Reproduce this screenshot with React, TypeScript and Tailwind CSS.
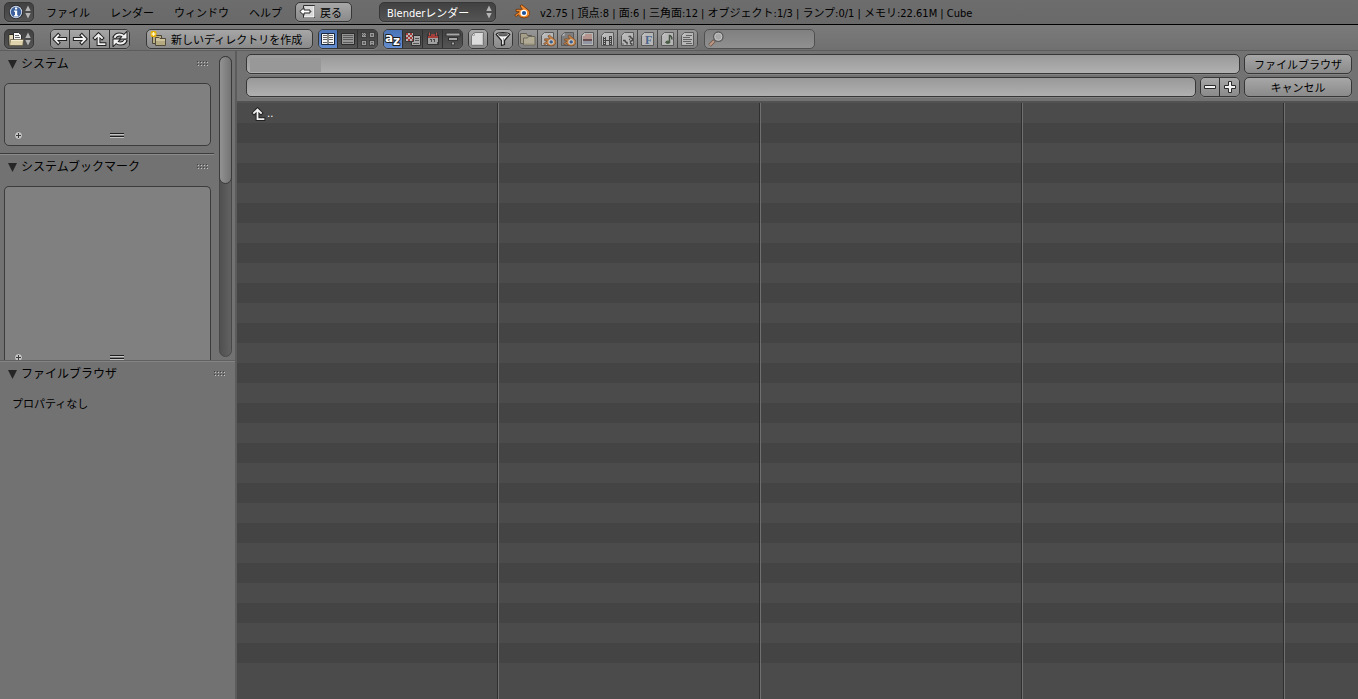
import type { ReactNode } from "react";

const fontStack = "font-['DejaVu_Sans_Condensed','DejaVu_Sans','Noto_Sans_CJK_JP',sans-serif]";
const outline = "border border-[#373737] shadow-[0_1px_0_rgba(255,255,255,0.12)]";
const toolFill = "bg-linear-to-b from-[#a7a7a7] to-[#8a8a8a]";
const darkFill = "bg-linear-to-b from-[#414141] to-[#545454]";
const blueFill = "bg-linear-to-b from-[#4a74b6] to-[#648ed0]";

function Icon({ children, className = "" }: { children: ReactNode; className?: string }) {
  return (
    <svg viewBox="0 0 16 16" aria-hidden="true" className={`h-4 w-4 shrink-0 ${className}`}>
      {children}
    </svg>
  );
}

function Outlined({ d, w = 2 }: { d: string; w?: number }) {
  return (
    <g fill="none" strokeLinejoin="miter">
      <path d={d} stroke="#222" strokeWidth={w + 2} strokeLinecap="square" />
      <path d={d} stroke="#f2f2f2" strokeWidth={w} strokeLinecap="square" />
    </g>
  );
}

function UpDown() {
  return (
    <svg viewBox="0 0 6 14" aria-hidden="true" className="h-3.5 w-1.5 shrink-0">
      <path d="M3 .5 5.7 6H.3Z M3 13.5 5.7 8H.3Z" fill="#b4b4b4" />
    </svg>
  );
}

const InfoIcon = () => (
  <Icon>
    <circle cx="8" cy="8" r="7" fill="#23262c" />
    <circle cx="8" cy="8" r="6.2" fill="#cfd8e6" />
    <circle cx="8" cy="8" r="5.2" fill="#3b609b" />
    <path d="M7 3.5h2.2v2H7ZM6 6.5h3.2v4.7h1v1.3H6v-1.3h1V7.7H6Z" fill="#fff" />
  </Icon>
);

const FileBrowserIcon = () => (
  <Icon>
    <path d="M.8 14.2V3.5h5v10.7Z" fill="#e3d9b8" stroke="#2a2824" />
    <path d="M5.5 1.5h5l3 2.5v6h-8Z" fill="#f6f6f6" stroke="#2d2d2d" />
    <path d="M7 4.5h4M7 6.5h5" stroke="#666" />
    <path d="M2.5 8.5h13l-.7 6H1.5Z" fill="#ddd2ac" stroke="#5a5341" strokeWidth="0.7" />
    <path d="M3 9.5h12" stroke="#f3ebcd" />
  </Icon>
);

const BackIcon = () => (
  <Icon>
    <path d="M4.5 1.5h11v12h-11Z" fill="#d9d9d9" stroke="#303030" />
    <path d="M5 13h10V2" fill="none" stroke="#fff" />
    <path d="M5 3.7.8 7.5 5 11.3V9h6V6H5Z" fill="#fff" stroke="#222" />
    <path d="M11 7.5h1.5" stroke="#555" />
  </Icon>
);

const ArrowLeft = () => (
  <Icon><Outlined d="M6.2 4.3 2.7 8l3.5 3.7M3.2 8h10" w={1.8} /></Icon>
);
const ArrowRight = () => (
  <Icon><Outlined d="M9.8 4.3 13.3 8l-3.5 3.7M12.8 8h-10" w={1.8} /></Icon>
);
const ArrowUp = () => (
  <Icon><Outlined d="M3 7 6.5 3.5 10 7M6.5 4.2v9h6" w={1.8} /></Icon>
);
const ReloadIcon = () => (
  <svg viewBox="0 0 18 16" aria-hidden="true" className="h-4 w-4.5 shrink-0">
    <g fill="none" stroke="#222" strokeWidth="4">
      <path d="M3 7.3Q4.5 3.4 8.5 3.4q2.5 0 4 1.6M15 8.7Q13.5 12.6 9.5 12.6q-2.5 0-4-1.6" />
    </g>
    <path d="M15.5 1.5v6h-6Z M2.5 14.5v-6h6Z" fill="#f2f2f2" stroke="#222" strokeWidth="2" />
    <g fill="none" stroke="#f2f2f2" strokeWidth="2">
      <path d="M3.5 6.8Q4.8 3.4 8.5 3.4q2.5 0 4 1.6M14.5 9.2Q13.2 12.6 9.5 12.6q-2.5 0-4-1.6" />
    </g>
    <path d="M15.5 1.5v6h-6Z M2.5 14.5v-6h6Z" fill="#f2f2f2" />
  </svg>
);

const NewFolderIcon = () => (
  <Icon>
    <path d="M2.5 12.5v-8h9v8Z" fill="#bcae83" stroke="#4b4636" />
    <path d="M5.5 14.5V6.5H9l1 1h5.5v7Z" fill="#d0c49c" stroke="#4f4a3a" />
    <path d="M6 14V10h9v4Z" fill="#b5a981" />
    <path d="M3.5 0v6M.5 3h6" stroke="#e1a500" strokeWidth="3" />
    <path d="M1 .5l5 5M6 .5l-5 5" stroke="#eeb500" strokeWidth="1.3" />
    <path d="M3.5 1v4M1.5 3h4" stroke="#fff7c5" strokeWidth="1.3" />
  </Icon>
);

const ShortListIcon = () => (
  <Icon>
    <path d="M1.5 2.5h13v11h-13Z" fill="#f5f5f5" stroke="#19263e" />
    <path d="M3 4.5h4M3 6.5h4M3 8.5h4M3 11.5h4M9 4.5h4M9 6.5h4M9 8.5h4M9 11.5h4" stroke="#666" />
    <path d="M8 3v10" stroke="#222" />
  </Icon>
);
const LongListIcon = () => (
  <Icon>
    <path d="M1.5 2.5h13v11h-13Z" fill="#959595" stroke="#2b2b2b" />
    <path d="M3 4.5h10M3 6.5h10M3 8.5h10M3 11.5h10" stroke="#5a5a5a" />
  </Icon>
);
const ThumbsIcon = () => (
  <Icon>
    {[[1.5, 1.5], [9.5, 1.5], [1.5, 9.5], [9.5, 9.5]].map(([x, y]) => (
      <rect key={`${x}-${y}`} x={x} y={y} width="5" height="5" fill="#9a9a9a" stroke="#333" strokeWidth="0.8" />
    ))}
    <path d="M3 2h1v1H3ZM5 2h1v1H5ZM2 3h1v1H2ZM4 3h1v1H4ZM3 4h1v1H3ZM5 4h1v1H5ZM11 3h2v2h-2ZM11 11h2v1h-2ZM11 13h2v1h-2ZM3 11h2v2H3Z" fill="#606060" />
  </Icon>
);

const AzIcon = () => (
  <svg viewBox="0 0 18 18" aria-hidden="true" className="h-4.5 w-4.5 shrink-0">
    <g
      fill="#fff"
      stroke="#1e1e1e"
      strokeWidth="2"
      strokeLinejoin="round"
      fontSize="12"
      fontWeight="700"
      fontFamily="DejaVu Sans, sans-serif"
      className="[paint-order:stroke]"
    >
      <text x="1" y="11.5">a</text>
      <text x="9" y="15">z</text>
    </g>
  </svg>
);

const ExtensionIcon = () => (
  <Icon>
    <path d="M6.5 4.5h9v10h-9Z" fill="#a8a8a8" stroke="#303030" />
    <path d="M10 7.5h4M10 9.5h4M8 12.5h6" stroke="#555" />
    <path d="M.5 1.5h8v9h-8Z" fill="#b4b4b4" stroke="#363636" />
    <path d="M1 2h2v2H1ZM5 2h2v2H5ZM3 4h2v2H3ZM7 4h1v2H7ZM1 6h2v2H1ZM5 6h2v2H5ZM3 8h2v2H3ZM7 8h1v2H7Z" fill="#a43a36" />
  </Icon>
);
const CalendarIcon = () => (
  <Icon>
    <path d="M2.5 3.5h11v10h-11Z" fill="#a0a0a0" stroke="#323232" />
    <path d="M3 3h10v4H3Z" fill="#a43f3c" />
    <path d="M4.5 1v4M11.5 1v4" stroke="#383838" strokeWidth="3" />
    <path d="M4.5 1.5v3M11.5 1.5v3" stroke="#bd5551" />
    <path d="M6.5 8v3M9.5 8v3M5 8.5h1M8 8.5h1M12.5 11v2" fill="none" stroke="#4a4a4a" />
  </Icon>
);
const SizeIcon = () => (
  <Icon>
    <path d="M.5 3.5h15M3 8h10M6.5 12.5h3" stroke="#2e2e2e" strokeWidth="3.6" />
    <path d="M1.5 3.5h13M4 8h8M7 12.5h2" stroke="#a6a6a6" strokeWidth="1.8" />
  </Icon>
);

function Page({ children, fill = "#dcdcdc" }: { children?: ReactNode; fill?: string }) {
  return (
    <Icon>
      <path d="M4.5 1.5h9v13h-12v-10Z" fill={fill} stroke="#4c4c4c" />
      <path d="M2 4.5 4.5 2v2.5Z" fill="#f4f4f4" />
      {children}
    </Icon>
  );
}

const GhostIcon = () => (
  <Icon>
    <path d="M4.5 1.5h9v13h-12v-10Z" fill="#dcdcdc" stroke="#777" />
    <path d="M2 4.5h2.5V2" fill="none" stroke="#aaa" />
    <path d="M2.5 13.5h10V3" fill="none" stroke="#c2c2c2" />
  </Icon>
);
const FunnelIcon = () => (
  <Icon>
    <path d="M1.2 3.5 6.5 9.5v5l3-1V9.5l5.3-6Q14 1.5 8 1.5T1.2 3.5Z" fill="#f4f4f4" stroke="#222" strokeWidth="1.2" />
    <ellipse cx="8" cy="3.8" rx="4.6" ry="1.2" fill="#777" stroke="#202020" strokeWidth="0.6" />
    <path d="M8.5 7v6" stroke="#aaa" />
  </Icon>
);
const FolderIcon = () => (
  <Icon>
    <path d="M.5 12.5v-10h6l1 2h4v8Z" fill="#c0b695" stroke="#555042" />
    <path d="M3.5 14V7h4l1-1.5H15V14Z" fill="#d2c8a6" stroke="#66604f" />
    <path d="M4 13h10.5" stroke="#b0a684" />
  </Icon>
);

const logoBody =
  "M6 1.8 7.8.8l6.7 5.4q1.7 2 1.2 4.2Q14.6 14 10 14q-4.5 0-5.5-3.3L2.3 12.5.6 11.3 5.2 7.8 2 7.5V5.3H8.3Z";

function LogoMark() {
  return (
    <g>
      <path d={logoBody} fill="#f08a2a" stroke="#6d3814" strokeWidth="0.9" />
      <circle cx="9.8" cy="9" r="3.3" fill="#fff" />
      <circle cx="10" cy="9" r="2.1" fill="#1e5398" />
    </g>
  );
}

const Rings = () => (
  <g transform="translate(3 3.5) scale(0.82)">
    <LogoMark />
  </g>
);
const ImagePage = () => (
  <Page>
    <path d="M5 3h7v5H3V5h2Z" fill="#d7a69a" />
    <path d="M3 8h9v2H3Z" fill="#613c42" />
    <path d="M3 10h9v3H3Z" fill="#a2a9bc" />
  </Page>
);
const FilmPage = () => (
  <Page>
    <path d="M4.5 6v8M10.5 5v9" stroke="#292929" strokeWidth="3" />
    <path d="M4.5 6v8M10.5 6v8" stroke="#e2e2e2" strokeDasharray="1 1" />
    <path d="M6 9.5h3" stroke="#333" />
  </Page>
);
const ScriptPage = () => (
  <Page>
    <path d="M8.5 5.5h2l.5 1.5 1.5.5v2l-1.5.5-1 1.5M3 9.5h2l.5 1.5 1.5.5v2M2.5 13h1M9 8.5h1M10 12l2.5 1.5" fill="none" stroke="#333" strokeWidth="1.5" />
  </Page>
);
const FontPage = () => (
  <Page>
    <text x="5" y="13" fontSize="12" fontWeight="700" fill="#35609c" fontFamily="Liberation Serif, serif">F</text>
  </Page>
);
const SoundPage = () => (
  <Page>
    <path d="M9.5 11V4.5q2.5.5 2.5 4" fill="none" stroke="#30442e" strokeWidth="1.5" />
    <ellipse cx="7.8" cy="11.3" rx="2.4" ry="1.8" fill="#35552f" />
  </Page>
);
const TextPage = () => (
  <Page>
    <path d="M6 4.5h6M3 6.5h7M3 8.5h9M3 10.5h8M6 12.5h6" stroke="#5a5a5a" />
  </Page>
);

const SearchIcon = () => (
  <Icon>
    <path d="M1.5 14.5 6.5 9.5" stroke="#56453c" strokeWidth="3.6" />
    <path d="M1.8 14.2 6 10" stroke="#d19a7c" strokeWidth="2.2" />
    <circle cx="10.3" cy="5.7" r="4.7" fill="#b4b4b4" stroke="#4b4b4b" strokeWidth="1.3" />
    <circle cx="10.3" cy="5.7" r="3.5" fill="none" stroke="#d5d5d5" />
  </Icon>
);

function Grip() {
  return (
    <svg viewBox="0 0 12 6" aria-hidden="true" className="h-1.5 w-3">
      {[0, 3, 6, 9].flatMap((x) =>
        [0, 3].map((y) => (
          <g key={`${x}-${y}`}>
            <rect x={x} y={y} width="1" height="1" fill="#444" />
            <rect x={x + 1} y={y + 1} width="1" height="1" fill="#c4c4c4" />
          </g>
        )),
      )}
    </svg>
  );
}

function PanelHeader({ title, grip = "mr-[5px]" }: { title: string; grip?: string }) {
  return (
    <div className="flex h-6 items-center">
      <button className="flex items-center gap-1 pl-2 text-[12px] leading-6">
        <svg viewBox="0 0 9 9" aria-hidden="true" className="h-[9px] w-[9px]">
          <path d="M0 0h9L4.5 9Z" fill="#262626" />
        </svg>
        {title}
      </button>
      <span className={`ml-auto ${grip}`}>
        <Grip />
      </span>
    </div>
  );
}

function ListFooter() {
  return (
    <div className="flex h-4 items-center">
      <button aria-label="フィルター" className="ml-[9px]">
        <svg viewBox="0 0 9 9" className="h-[9px] w-[9px]" aria-hidden="true">
          <circle cx="4.5" cy="4.5" r="4" fill="#c6c6c6" stroke="#666" strokeWidth="0.8" />
          <path d="M4.5 2v5M2 4.5h5" stroke="#3c3c3c" />
        </svg>
      </button>
      <svg viewBox="0 0 14 6" className="mx-auto mt-0.5 h-1.5 w-3.5" aria-hidden="true">
        <path d="M0 .5h14M0 3.5h14" stroke="#1e1e1e" />
        <path d="M0 1.5h14M0 4.5h14" stroke="#c4c4c4" />
      </svg>
    </div>
  );
}

type Item = { label: string; icon: ReactNode; active?: boolean };

function Group({ items, fill, className = "" }: { items: Item[]; fill: string; className?: string }) {
  return (
    <div className={`flex h-5 shrink-0 divide-x divide-[#303030] overflow-hidden rounded-[5px] ${outline} ${className}`}>
      {items.map((item, i) => (
        <button
          key={item.label}
          aria-label={item.label}
          title={item.label}
          className={`flex items-center justify-center ${
            i === items.length - 1 ? "min-w-0 flex-1" : i === 0 ? "w-[19px] shrink-0" : "w-5 shrink-0"
          } ${item.active ? blueFill : fill}`}
        >
          {item.icon}
        </button>
      ))}
    </div>
  );
}

const navItems: Item[] = [
  { label: "前へ", icon: <ArrowLeft /> },
  { label: "次へ", icon: <ArrowRight /> },
  { label: "親ディレクトリ", icon: <ArrowUp /> },
  { label: "更新", icon: <ReloadIcon /> },
];
const displayItems: Item[] = [
  { label: "短いリスト", icon: <ShortListIcon />, active: true },
  { label: "長いリスト", icon: <LongListIcon /> },
  { label: "サムネイル", icon: <ThumbsIcon /> },
];
const sortItems: Item[] = [
  { label: "名前順", icon: <AzIcon />, active: true },
  { label: "拡張子順", icon: <ExtensionIcon /> },
  { label: "日時順", icon: <CalendarIcon /> },
  { label: "サイズ順", icon: <SizeIcon /> },
];
const filterItems: Item[] = [
  { label: "フォルダー", icon: <FolderIcon /> },
  { label: "Blend", icon: <Page><Rings /></Page> },
  { label: "バックアップ", icon: <Page fill="#858585"><Rings /></Page> },
  { label: "画像", icon: <ImagePage /> },
  { label: "動画", icon: <FilmPage /> },
  { label: "スクリプト", icon: <ScriptPage /> },
  { label: "フォント", icon: <FontPage /> },
  { label: "サウンド", icon: <SoundPage /> },
  { label: "テキスト", icon: <TextPage /> },
];

function EditorButton({ label, icon }: { label: string; icon: ReactNode }) {
  return (
    <button
      aria-label={label}
      className={`flex h-5 w-[30px] shrink-0 items-center gap-px rounded-[5px] pl-[3px] ${outline} ${darkFill}`}
    >
      {icon}
      <UpDown />
    </button>
  );
}

function InfoHeader() {
  return (
    <header className="flex h-[25px] shrink-0 items-center border-b border-black bg-linear-to-b from-[#6d6d6d] to-[#696969] pl-1 whitespace-nowrap">
      <EditorButton label="情報" icon={<InfoIcon />} />
      <nav className="ml-3 flex gap-5 pt-[3px]">
        {["ファイル", "レンダー", "ウィンドウ", "ヘルプ"].map((m) => (
          <button key={m}>{m}</button>
        ))}
      </nav>
      <button className={`ml-[13px] flex h-5 w-[57px] shrink-0 items-center gap-[5px] rounded-[5px] pl-[3px] ${outline} ${toolFill}`}>
        <BackIcon />
        <span className="pt-[3px]">戻る</span>
      </button>
      <div className={`ml-[27px] flex h-5 w-[117px] shrink-0 items-center rounded-[5px] pr-[3px] ${outline} ${darkFill}`}>
        <select aria-label="レンダーエンジン" className="h-full min-w-0 flex-1 appearance-none bg-transparent pt-[3px] pl-[7px] text-white outline-none">
          <option>Blenderレンダー</option>
        </select>
        <UpDown />
      </div>
      <span className="mr-[10px] ml-[18px]">
        <Icon>
          <LogoMark />
        </Icon>
      </span>
      <p className="pt-[3px]">v2.75 | 頂点:8 | 面:6 | 三角面:12 | オブジェクト:1/3 | ランプ:0/1 | メモリ:22.61M | Cube</p>
    </header>
  );
}

function BrowserHeader() {
  return (
    <div className="flex h-[26px] shrink-0 items-center border-b border-[#5d5d5d] bg-linear-to-b from-[#7b7b7b] to-[#707070] pt-[3px] pl-1 whitespace-nowrap">
      <EditorButton label="ファイルブラウザ" icon={<FileBrowserIcon />} />
      <Group items={navItems} fill={toolFill} className="ml-4 w-20" />
      <button className={`ml-4 flex h-5 w-[167px] shrink-0 items-center gap-[5px] rounded-[5px] pl-[3px] ${outline} ${toolFill}`}>
        <NewFolderIcon />
        <span className="pt-[3px]">新しいディレクトリを作成</span>
      </button>
      <Group items={displayItems} fill={darkFill} className="ml-[5px] w-[60px]" />
      <Group items={sortItems} fill={darkFill} className="ml-[5px] w-20" />
      <Group items={[{ label: "隠しファイル", icon: <GhostIcon /> }]} fill={toolFill} className="ml-[5px] w-5" />
      <Group items={[{ label: "フィルター", icon: <FunnelIcon /> }]} fill={toolFill} className="ml-[5px] w-5" />
      <Group items={filterItems} fill={toolFill} className="ml-[5px] w-[180px] opacity-65" />
      <label className="ml-1.5 flex h-5 w-[111px] shrink-0 items-center rounded-[5px] border border-[#505050] bg-linear-to-b from-[#808080] to-[#909090] pl-[3px]">
        <span className="opacity-75">
          <SearchIcon />
        </span>
        <input aria-label="検索" className="h-full min-w-0 flex-1 bg-transparent px-1 outline-none" />
      </label>
    </div>
  );
}

function Sidebar() {
  return (
    <aside className="flex w-[237px] shrink-0 flex-col border-r-2 border-[#5c5c5c] bg-[#727272]">
      <div className="flex h-[310px] shrink-0 overflow-hidden border-b border-[#606060]">
        <div className="flex w-[214px] flex-col">
          <section className="flex h-[103px] shrink-0 flex-col border-b border-[#3c3c3c] pt-px">
            <PanelHeader title="システム" />
            <div className="mt-[7px] mr-[3px] ml-1 flex h-[63px] flex-col justify-end rounded-[5px] border border-[#3c3c3c] bg-[#808080] pb-[2px]">
              <ListFooter />
            </div>
          </section>
          <section className="flex flex-1 flex-col border-t border-[#8b8b8b]">
            <PanelHeader title="システムブックマーク" />
            <div className="mt-[7px] mr-[3px] ml-1 flex flex-1 flex-col justify-end rounded-t-[5px] border border-b-0 border-[#3c3c3c] bg-[#808080]">
              <div className="-mb-[5px]">
                <ListFooter />
              </div>
            </div>
          </section>
        </div>
        <div className="mt-[5px] ml-[5px] h-[301px] w-[13px] rounded-full border border-[#484848] bg-linear-to-r from-[#505050] to-[#626262]">
          <div className="-mx-px -mt-px h-32 rounded-full border border-[#3a3a3a] bg-linear-to-r from-[#929292] to-[#747474]" />
        </div>
      </div>
      <section className="border-t border-[#848484]">
        <PanelHeader title="ファイルブラウザ" grip="mr-[9px]" />
        <p className="mt-[11px] pl-3 leading-4">プロパティなし</p>
      </section>
    </aside>
  );
}

const Minus = () => (
  <Icon><path d="M2.5 6.5h11v3h-11Z" fill="#f4f4f4" stroke="#2a2a2a" /></Icon>
);
const Plus = () => (
  <Icon><path d="M6.5 2.5h3v4h4v3h-4v4h-3v-4h-4v-3h4Z" fill="#f4f4f4" stroke="#2a2a2a" /></Icon>
);

function PathFields() {
  const field = `h-5 min-w-0 flex-1 rounded-[5px] px-2 outline-none ${outline}`;
  const action = `h-5 w-[108px] shrink-0 rounded-[5px] pt-[3px] ${outline} ${toolFill}`;
  return (
    <div className="flex shrink-0 flex-col gap-[3px] border-b-2 border-[#525252] bg-[#727272] pt-[3px] pr-1.5 pb-1 pl-[9px]">
      <div className="flex gap-1">
        <input
          aria-label="ディレクトリ"
          className={`${field} bg-[linear-gradient(#989898,#989898),linear-gradient(#999999,#b0b0b0)] bg-[length:71px_14px,100%_100%] bg-[position:3px_3px,0_0] bg-no-repeat`}
        />
        <button className={action}>ファイルブラウザ</button>
      </div>
      <div className="flex gap-1">
        <input aria-label="ファイル名" className={`${field} bg-linear-to-b from-[#999999] to-[#b0b0b0]`} />
        <Group
          items={[{ label: "減らす", icon: <Minus /> }, { label: "増やす", icon: <Plus /> }]}
          fill={toolFill}
          className="w-10"
        />
        <button className={action}>キャンセル</button>
      </div>
    </div>
  );
}

const rows = Array.from({ length: 28 }, (_, i) => i);
const columns = Array.from({ length: 4 }, (_, i) => i);

function FileList() {
  return (
    <div className="grid min-h-0 flex-1 overflow-hidden bg-[#4b4b4b]">
      <div className="col-start-1 row-start-1">
        {rows.map((r) => (
          <div key={r} className={`flex h-5 items-center ${r % 2 ? "bg-[#444444]" : "bg-[#4b4b4b]"}`}>
            {r === 0 && (
              <button className="flex items-center pt-[2px] pl-[14px] text-white">
                <ArrowUp />
                ..
              </button>
            )}
          </div>
        ))}
      </div>
      <div className="pointer-events-none col-start-1 row-start-1 flex overflow-hidden">
        {columns.map((c) => (
          <div key={c} className="flex w-[262px] shrink-0 justify-end">
            <div className="w-px bg-[#2f2f2f]" />
            <div className="w-px bg-[#707070]" />
          </div>
        ))}
      </div>
    </div>
  );
}

export default function App() {
  return (
    <div lang="ja" className={`flex h-screen flex-col overflow-hidden bg-[#727272] text-[11px] leading-4 text-black ${fontStack}`}>
      <InfoHeader />
      <BrowserHeader />
      <div className="flex min-h-0 flex-1">
        <Sidebar />
        <main className="flex min-w-0 flex-1 flex-col">
          <PathFields />
          <FileList />
        </main>
      </div>
    </div>
  );
}
